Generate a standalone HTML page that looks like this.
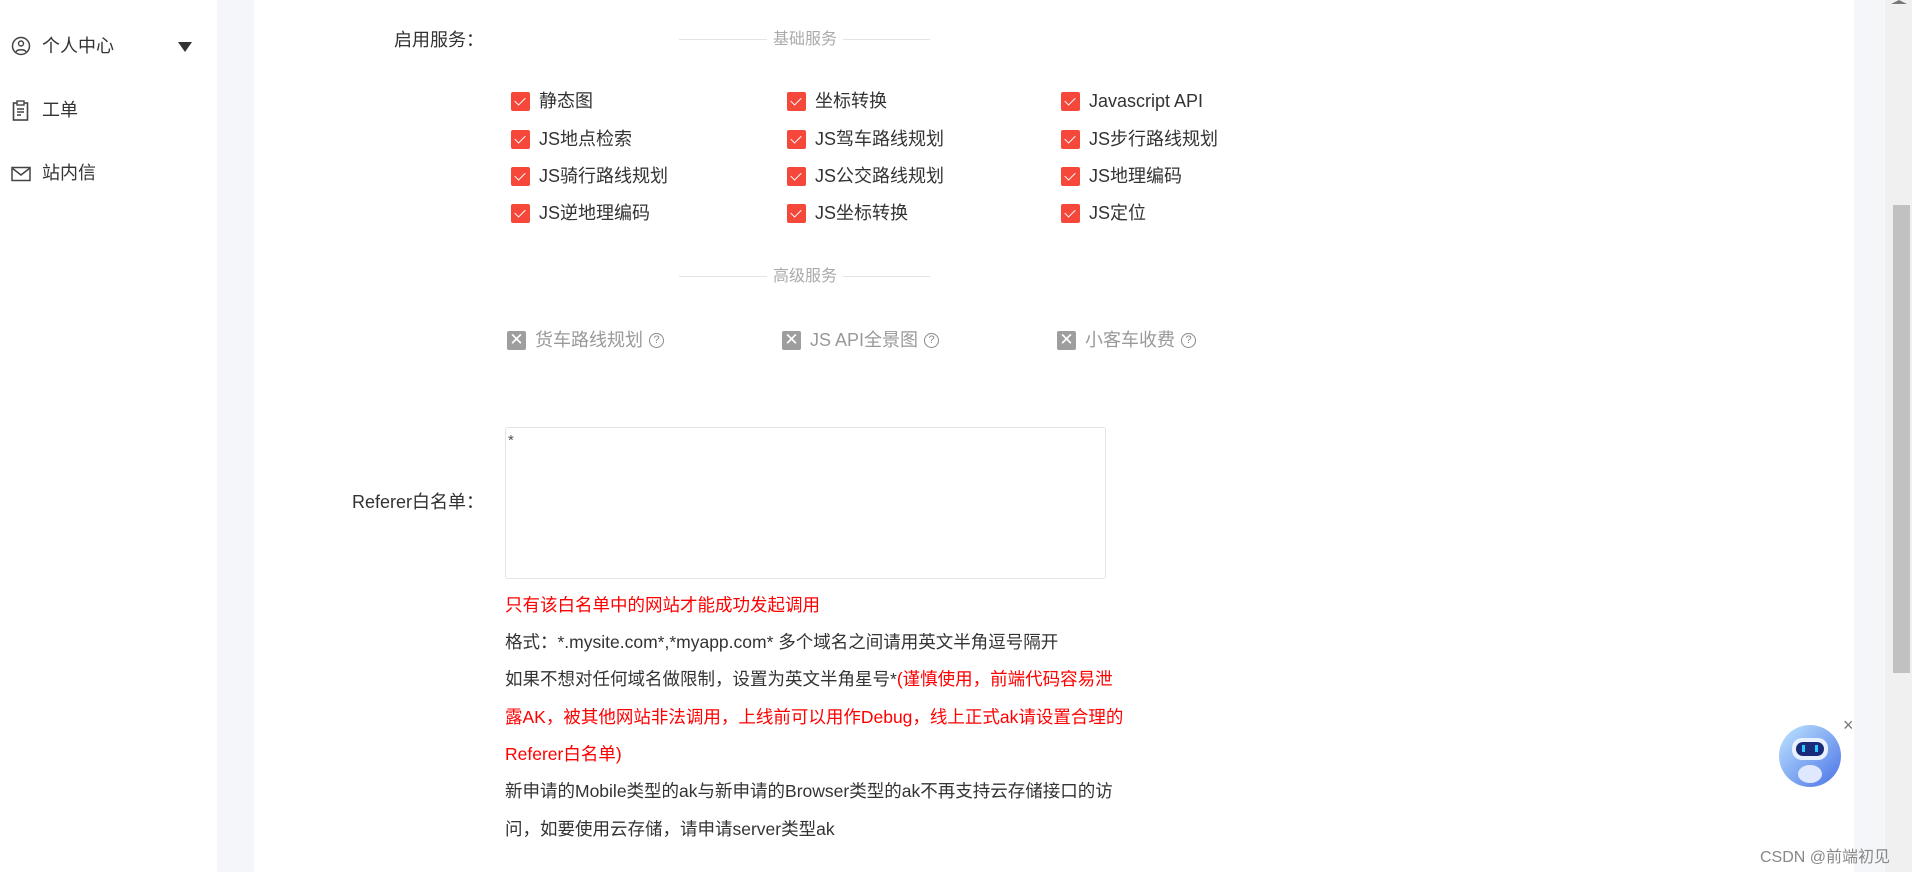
<!DOCTYPE html>
<html><head><meta charset="utf-8"><style>
*{margin:0;padding:0;box-sizing:border-box}
body{width:1912px;height:872px;overflow:hidden;background:#fff;font-family:"Liberation Sans","Noto Sans CJK SC",sans-serif;color:#333;position:relative}
.abs{position:absolute}
.side{left:0;top:0;width:217px;height:872px;background:#fff}
.gray{left:217px;top:0;width:37px;height:872px;background:#f5f6fa}
.gray2{left:1854px;top:0;width:31px;height:872px;background:#f5f6fa}
.sb{left:1885px;top:0;width:27px;height:872px;background:#f0f0f0}
.thumb{left:1893px;top:205px;width:17px;height:468px;background:#c1c1c1}
.si{font-size:18px;color:#333;white-space:nowrap;line-height:24px}
.lbl{font-size:18px;color:#333;text-align:right;width:300px;line-height:24px}
.div{height:1px;background:#e4e4e4;width:251px;left:679px}
.dt{font-size:16px;color:#aaa;background:#fff;padding:0 6px;transform:translateX(-50%);line-height:22px}
.cb{font-size:18px;white-space:nowrap;display:flex;align-items:center;height:24px;line-height:24px}
.cb i{display:inline-block;flex:none;width:19px;height:19px;background:#f5483b;border-radius:2px;margin-right:9px;position:relative}
.cb i:after{content:"";position:absolute;left:6px;top:3px;width:5px;height:9px;border:solid #fff;border-width:0 1.5px 1.5px 0;transform:rotate(45deg)}
.dis{color:#999}
.dis i{background:#9e9e9e}
.dis i:after{display:none}
.dis b{font-weight:normal;display:inline-block;width:15px;height:15px;border:1.5px solid #888;border-radius:50%;font-size:11px;line-height:12px;text-align:center;color:#888;margin-left:6px}
.t{font-size:17.5px;white-space:nowrap;left:505px;line-height:24px}
.r{color:#f00}
</style></head><body>
<div class="abs side"></div>
<div class="abs gray"></div>
<div class="abs gray2"></div>
<div class="abs sb"></div>
<div class="abs thumb"></div>
<div class="abs" style="left:1891px;top:0;width:0;height:0;border-left:8px solid transparent;border-right:8px solid transparent;border-bottom:4px solid #777"></div>

<svg class="abs" style="left:11px;top:36px" width="20" height="20" viewBox="0 0 20 20"><circle cx="10" cy="10" r="8.5" fill="none" stroke="#444" stroke-width="1.5"/><circle cx="10" cy="7.5" r="2.5" fill="none" stroke="#444" stroke-width="1.4"/><path d="M5 16c1-3 9-3 10 0" fill="none" stroke="#444" stroke-width="1.4"/></svg>
<div class="abs si" style="left:42px;top:34px">个人中心</div>
<div class="abs" style="left:178px;top:42px;border-left:7px solid transparent;border-right:7px solid transparent;border-top:10px solid #333"></div>
<svg class="abs" style="left:12px;top:100px" width="18" height="22" viewBox="0 0 18 22"><rect x="1.5" y="3" width="14" height="17" fill="none" stroke="#444" stroke-width="1.6"/><rect x="5" y="1" width="7" height="4" fill="#fff" stroke="#444" stroke-width="1.4"/><path d="M5 9h7M5 12h7M5 15h4" stroke="#444" stroke-width="1.4"/></svg>
<div class="abs si" style="left:42px;top:98px">工单</div>
<svg class="abs" style="left:11px;top:166px" width="20" height="16" viewBox="0 0 20 16"><rect x="1" y="1.5" width="18" height="13" fill="none" stroke="#444" stroke-width="1.5"/><path d="M1 2l9 7 9-7" fill="none" stroke="#444" stroke-width="1.5"/></svg>
<div class="abs si" style="left:42px;top:161px">站内信</div>

<div class="abs lbl" style="left:184px;top:28px">启用服务：</div>
<div class="abs div" style="top:39px"></div>
<div class="abs dt" style="left:805px;top:29px">基础服务</div>

<div class="abs cb" style="left:511px;top:89px"><i></i>静态图</div>
<div class="abs cb" style="left:787px;top:89px"><i></i>坐标转换</div>
<div class="abs cb" style="left:1061px;top:89px"><i></i>Javascript API</div>
<div class="abs cb" style="left:511px;top:127px"><i></i>JS地点检索</div>
<div class="abs cb" style="left:787px;top:127px"><i></i>JS驾车路线规划</div>
<div class="abs cb" style="left:1061px;top:127px"><i></i>JS步行路线规划</div>
<div class="abs cb" style="left:511px;top:164px"><i></i>JS骑行路线规划</div>
<div class="abs cb" style="left:787px;top:164px"><i></i>JS公交路线规划</div>
<div class="abs cb" style="left:1061px;top:164px"><i></i>JS地理编码</div>
<div class="abs cb" style="left:511px;top:201px"><i></i>JS逆地理编码</div>
<div class="abs cb" style="left:787px;top:201px"><i></i>JS坐标转换</div>
<div class="abs cb" style="left:1061px;top:201px"><i></i>JS定位</div>

<div class="abs div" style="top:276px"></div>
<div class="abs dt" style="left:805px;top:266px">高级服务</div>

<div class="abs cb dis" style="left:507px;top:328px"><i style="display:flex;align-items:center;justify-content:center;color:#fff;font-style:normal;font-size:17px">✕</i>货车路线规划<b>?</b></div>
<div class="abs cb dis" style="left:782px;top:328px"><i style="display:flex;align-items:center;justify-content:center;color:#fff;font-style:normal;font-size:17px">✕</i>JS API全景图<b>?</b></div>
<div class="abs cb dis" style="left:1057px;top:328px"><i style="display:flex;align-items:center;justify-content:center;color:#fff;font-style:normal;font-size:17px">✕</i>小客车收费<b>?</b></div>

<div class="abs" style="left:505px;top:427px;width:601px;height:152px;border:1px solid #e4e4e4;border-radius:3px;font-size:15px;color:#555;padding:4px 2px">*</div>
<div class="abs lbl" style="left:184px;top:490px">Referer白名单：</div>

<div class="abs t r" style="top:593px">只有该白名单中的网站才能成功发起调用</div>
<div class="abs t" style="top:630px">格式：*.mysite.com*,*myapp.com* 多个域名之间请用英文半角逗号隔开</div>
<div class="abs t" style="top:667px">如果不想对任何域名做限制，设置为英文半角星号*<span class="r">(谨慎使用，前端代码容易泄</span></div>
<div class="abs t r" style="top:705px">露AK，被其他网站非法调用，上线前可以用作Debug，线上正式ak请设置合理的</div>
<div class="abs t r" style="top:742px">Referer白名单)</div>
<div class="abs t" style="top:779px">新申请的Mobile类型的ak与新申请的Browser类型的ak不再支持云存储接口的访</div>
<div class="abs t" style="top:817px">问，如要使用云存储，请申请server类型ak</div>

<svg class="abs" style="left:1778px;top:724px" width="64" height="64" viewBox="0 0 64 64"><defs><linearGradient id="g" x1="0" y1="0" x2="1" y2="1"><stop offset="0" stop-color="#bfe6ff"/><stop offset="1" stop-color="#4a72e6"/></linearGradient></defs><circle cx="32" cy="32" r="31" fill="url(#g)"/><rect x="14" y="14" width="36" height="22" rx="10" fill="#e8f0ff"/><rect x="18" y="18" width="28" height="14" rx="7" fill="#1a2a7a"/><rect x="24" y="21" width="3" height="7" fill="#29c8ff"/><rect x="37" y="21" width="3" height="7" fill="#29c8ff"/><ellipse cx="32" cy="50" rx="12" ry="9" fill="#dfe8ff"/></svg>
<div class="abs" style="left:1843px;top:715px;font-size:18px;color:#777">×</div>
<div class="abs" style="left:1760px;top:843px;font-size:16px;color:#888;white-space:nowrap">CSDN @前端初见</div>
</body></html>
